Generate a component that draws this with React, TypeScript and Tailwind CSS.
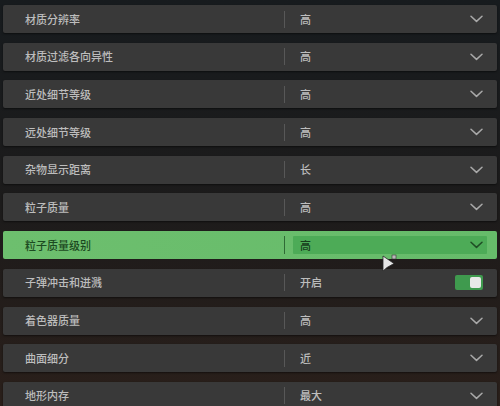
import { type ReactNode } from "react";

type Row = {
  label: string;
  value: string;
  kind?: "select" | "toggle";
  active?: boolean;
};

const rows: Row[] = [
  { label: "材质分辨率", value: "高" },
  { label: "材质过滤各向异性", value: "高" },
  { label: "近处细节等级", value: "高" },
  { label: "远处细节等级", value: "高" },
  { label: "杂物显示距离", value: "长" },
  { label: "粒子质量", value: "高" },
  { label: "粒子质量级别", value: "高", active: true },
  { label: "子弹冲击和迸溅", value: "开启", kind: "toggle" },
  { label: "着色器质量", value: "高" },
  { label: "曲面细分", value: "近" },
  { label: "地形内存", value: "最大" },
];

const font = "font-['Noto_Sans_CJK_SC','Noto_Sans',sans-serif]";

function Chevron({ dark }: { dark?: boolean }) {
  return (
    <svg width="13" height="8" viewBox="0 0 13 8" fill="none">
      <path
        d="M1 1.2 L6.5 6.4 L12 1.2"
        stroke={dark ? "#1f4d25" : "#a9a9a9"}
        strokeWidth="1.5"
        strokeLinecap="round"
        strokeLinejoin="round"
      />
    </svg>
  );
}

function Toggle() {
  return (
    <div className="flex h-[15px] w-[28px] items-center justify-end rounded-[2px] bg-[#3f9a4e] pr-[2px]">
      <div className="h-[11px] w-[11px] rounded-[2px] bg-[#e9e9e9]" />
    </div>
  );
}

function Cursor() {
  return (
    <svg
      className="absolute left-[381px] top-[254px]"
      width="18"
      height="20"
      viewBox="0 0 18 20"
    >
      <rect x="11" y="1" width="4" height="4" fill="#b9b9b9" stroke="#333" strokeWidth="0.6" />
      <path d="M2 2 L2 17 L6 13.5 L13 9.5 Z" fill="#e6e6e6" stroke="#2a2a2a" strokeWidth="0.8" />
    </svg>
  );
}

function SettingRow({ row }: { row: Row }) {
  let right: ReactNode;
  if (row.active) {
    right = (
      <div className="ml-[8px] mr-[10px] flex h-[18px] flex-1 items-center justify-between rounded-[1px] bg-[#4dab57] pl-[7px] pr-[4px]">
        <span className="text-[#173d1c]">{row.value}</span>
        <Chevron dark />
      </div>
    );
  } else {
    right = (
      <div className="flex flex-1 items-center justify-between pl-[15px] pr-[14px]">
        <span className="text-[#bdbdbd]">{row.value}</span>
        {row.kind === "toggle" ? <Toggle /> : <Chevron />}
      </div>
    );
  }

  return (
    <div
      className={
        row.active
          ? "flex h-[28px] shrink-0 items-center rounded-[2px] bg-gradient-to-r from-[#6dbf6e] to-[#66bb6a] text-[11px] leading-none font-medium"
          : "flex h-[28px] shrink-0 items-center rounded-[2px] bg-[#393939] text-[11px] leading-none font-medium shadow-[0_1px_2px_rgba(0,0,0,0.5)]"
      }
    >
      <div className="w-[281px] shrink-0 pl-[22px]">
        <span className={row.active ? "text-[#1c4a21]" : "text-[#bdbdbd]"}>{row.label}</span>
      </div>
      <div className={row.active ? "h-[18px] w-px bg-[#2f6a35]" : "h-[17px] w-px bg-[#585858]"} />
      {right}
    </div>
  );
}

export default function App() {
  return (
    <div
      className={`relative h-[406px] w-[500px] overflow-hidden bg-gradient-to-b from-[#171b1e] via-[#1c1b1b] to-[#2a1f1a] ${font}`}
    >
      <div className="flex flex-col gap-[9.7px] px-[3px] pt-[5px]">
        {rows.map((row) => (
          <SettingRow key={row.label} row={row} />
        ))}
      </div>
      <Cursor />
    </div>
  );
}
